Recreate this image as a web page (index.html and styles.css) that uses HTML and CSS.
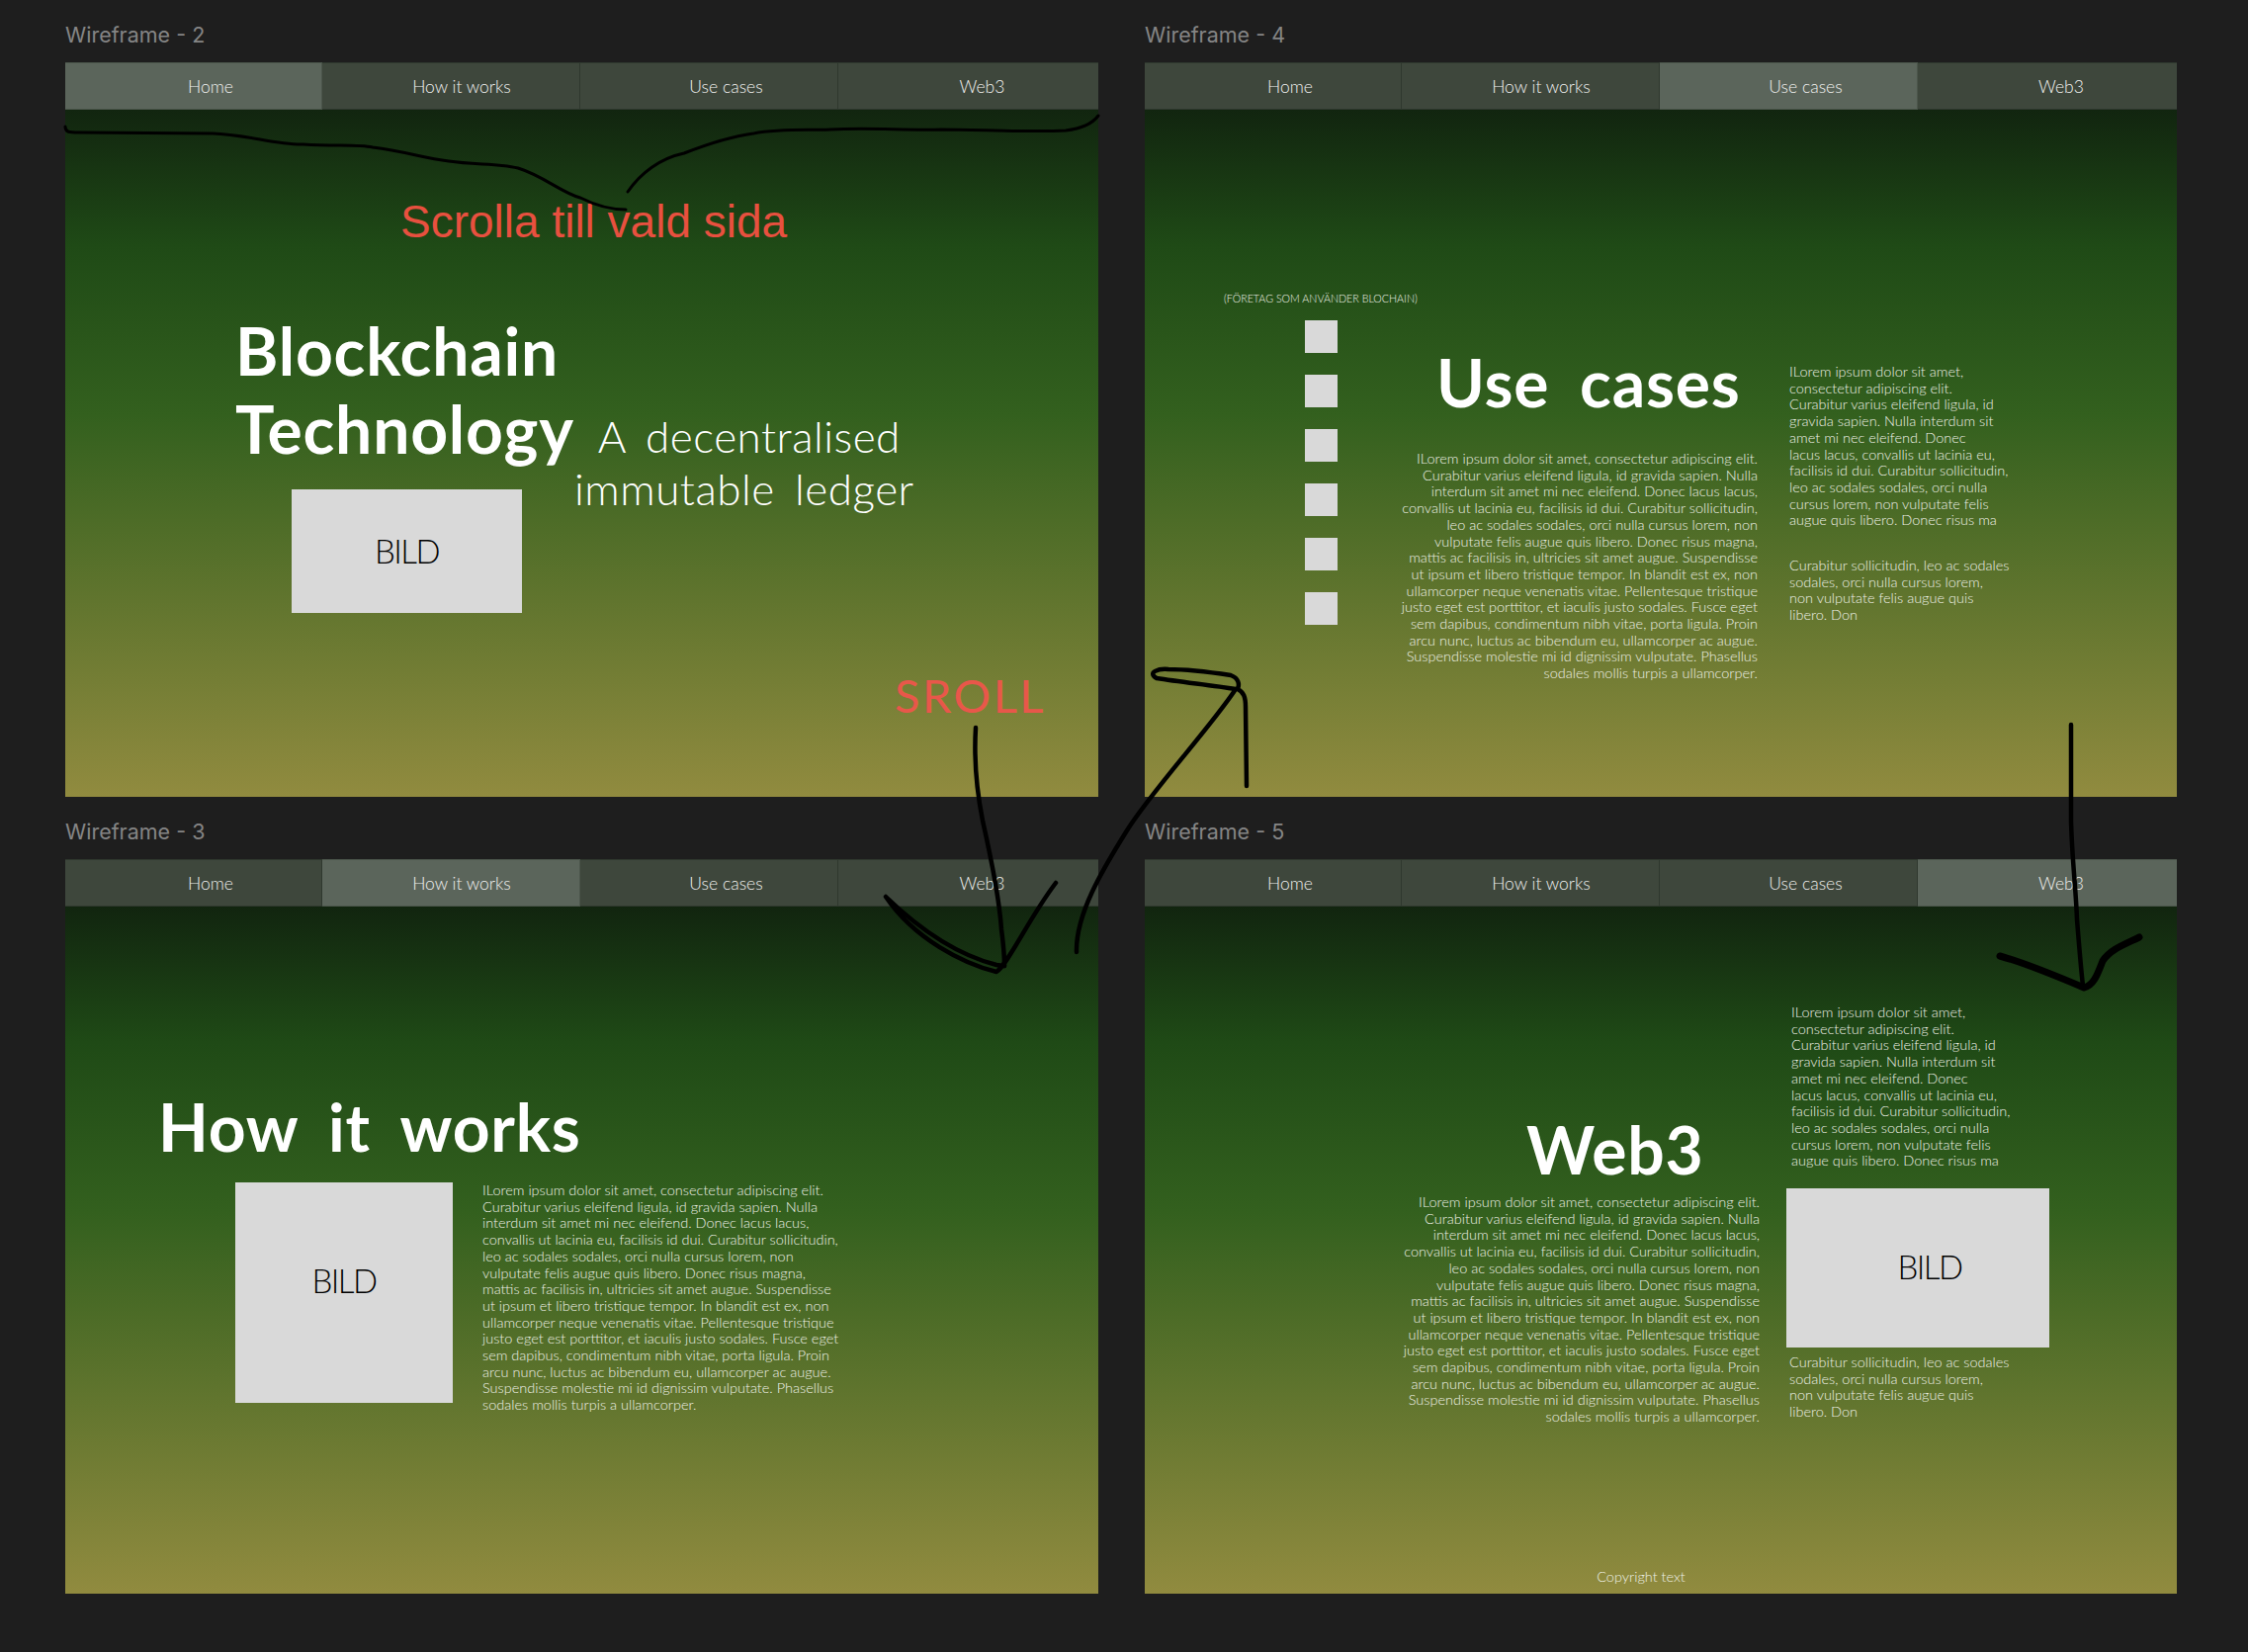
FILE: index.html
```html
<!DOCTYPE html>
<html lang="en">
<head>
  <meta charset="utf-8" />
  <title>Wireframes</title>
  <link rel="stylesheet" href="styles.css">
</head>
<body>
  <div id="board">

    <!-- home -->
    <section class="cell">
      <div class="label">Wireframe - 2</div>
      <div class="frame">
        <nav class="nav">
          <a class="tab active">Home</a><a class="tab">How it works</a><a class="tab">Use cases</a><a class="tab">Web3</a>
        </nav>
        <div class="screen home">
          <div class="note scroll-note">Scrolla till vald sida</div>
          <div class="home-left">
            <h1 class="title">Blockchain<br>Technology</h1>
            <div class="pic pic-home">BILD</div>
          </div>
          <p class="tagline">A decentralised<br>immutable ledger</p>
          <div class="note sroll">SROLL</div>
        </div>
      </div>
    </section>

    <!-- use cases -->
    <section class="cell">
      <div class="label">Wireframe - 4</div>
      <div class="frame">
        <nav class="nav">
          <a class="tab">Home</a><a class="tab">How it works</a><a class="tab active">Use cases</a><a class="tab">Web3</a>
        </nav>
        <div class="screen uses">
          <div class="logos">
            <div class="caption">(FÖRETAG SOM ANVÄNDER BLOCHAIN)</div>
            <div class="squares">
              <i></i><i></i><i></i><i></i><i></i><i></i>
            </div>
          </div>
          <div class="mid">
            <h1 class="title">Use cases</h1>
            <p class="copy right">ILorem ipsum dolor sit amet, consectetur adipiscing elit.<br>Curabitur varius eleifend ligula, id gravida sapien. Nulla<br>interdum sit amet mi nec eleifend. Donec lacus lacus,<br>convallis ut lacinia eu, facilisis id dui. Curabitur sollicitudin,<br>leo ac sodales sodales, orci nulla cursus lorem, non<br>vulputate felis augue quis libero. Donec risus magna,<br>mattis ac facilisis in, ultricies sit amet augue. Suspendisse<br>ut ipsum et libero tristique tempor. In blandit est ex, non<br>ullamcorper neque venenatis vitae. Pellentesque tristique<br>justo eget est porttitor, et iaculis justo sodales. Fusce eget<br>sem dapibus, condimentum nibh vitae, porta ligula. Proin<br>arcu nunc, luctus ac bibendum eu, ullamcorper ac augue.<br>Suspendisse molestie mi id dignissim vulputate. Phasellus<br>sodales mollis turpis a ullamcorper.</p>
          </div>
          <div class="side">
            <p class="copy">ILorem ipsum dolor sit amet,<br>consectetur adipiscing elit.<br>Curabitur varius eleifend ligula, id<br>gravida sapien. Nulla interdum sit<br>amet mi nec eleifend. Donec<br>lacus lacus, convallis ut lacinia eu,<br>facilisis id dui. Curabitur sollicitudin,<br>leo ac sodales sodales, orci nulla<br>cursus lorem, non vulputate felis<br>augue quis libero. Donec risus ma</p>
            <p class="copy second">Curabitur sollicitudin, leo ac sodales<br>sodales, orci nulla cursus lorem,<br>non vulputate felis augue quis<br>libero. Don</p>
          </div>
        </div>
      </div>
    </section>

    <!-- how it works -->
    <section class="cell">
      <div class="label">Wireframe - 3</div>
      <div class="frame">
        <nav class="nav">
          <a class="tab">Home</a><a class="tab active">How it works</a><a class="tab">Use cases</a><a class="tab">Web3</a>
        </nav>
        <div class="screen how">
          <h1 class="title">How it works</h1>
          <div class="how-row">
            <div class="pic pic-how">BILD</div>
            <p class="copy">ILorem ipsum dolor sit amet, consectetur adipiscing elit.<br>Curabitur varius eleifend ligula, id gravida sapien. Nulla<br>interdum sit amet mi nec eleifend. Donec lacus lacus,<br>convallis ut lacinia eu, facilisis id dui. Curabitur sollicitudin,<br>leo ac sodales sodales, orci nulla cursus lorem, non<br>vulputate felis augue quis libero. Donec risus magna,<br>mattis ac facilisis in, ultricies sit amet augue. Suspendisse<br>ut ipsum et libero tristique tempor. In blandit est ex, non<br>ullamcorper neque venenatis vitae. Pellentesque tristique<br>justo eget est porttitor, et iaculis justo sodales. Fusce eget<br>sem dapibus, condimentum nibh vitae, porta ligula. Proin<br>arcu nunc, luctus ac bibendum eu, ullamcorper ac augue.<br>Suspendisse molestie mi id dignissim vulputate. Phasellus<br>sodales mollis turpis a ullamcorper.</p>
          </div>
        </div>
      </div>
    </section>

    <!-- web3 -->
    <section class="cell">
      <div class="label">Wireframe - 5</div>
      <div class="frame">
        <nav class="nav">
          <a class="tab">Home</a><a class="tab">How it works</a><a class="tab">Use cases</a><a class="tab active">Web3</a>
        </nav>
        <div class="screen web3">
          <div class="web3-cols">
            <div class="mid">
              <h1 class="title">Web3</h1>
              <p class="copy right">ILorem ipsum dolor sit amet, consectetur adipiscing elit.<br>Curabitur varius eleifend ligula, id gravida sapien. Nulla<br>interdum sit amet mi nec eleifend. Donec lacus lacus,<br>convallis ut lacinia eu, facilisis id dui. Curabitur sollicitudin,<br>leo ac sodales sodales, orci nulla cursus lorem, non<br>vulputate felis augue quis libero. Donec risus magna,<br>mattis ac facilisis in, ultricies sit amet augue. Suspendisse<br>ut ipsum et libero tristique tempor. In blandit est ex, non<br>ullamcorper neque venenatis vitae. Pellentesque tristique<br>justo eget est porttitor, et iaculis justo sodales. Fusce eget<br>sem dapibus, condimentum nibh vitae, porta ligula. Proin<br>arcu nunc, luctus ac bibendum eu, ullamcorper ac augue.<br>Suspendisse molestie mi id dignissim vulputate. Phasellus<br>sodales mollis turpis a ullamcorper.</p>
            </div>
            <div class="side">
              <p class="copy first">ILorem ipsum dolor sit amet,<br>consectetur adipiscing elit.<br>Curabitur varius eleifend ligula, id<br>gravida sapien. Nulla interdum sit<br>amet mi nec eleifend. Donec<br>lacus lacus, convallis ut lacinia eu,<br>facilisis id dui. Curabitur sollicitudin,<br>leo ac sodales sodales, orci nulla<br>cursus lorem, non vulputate felis<br>augue quis libero. Donec risus ma</p>
              <div class="pic pic-web3">BILD</div>
              <p class="copy after">Curabitur sollicitudin, leo ac sodales<br>sodales, orci nulla cursus lorem,<br>non vulputate felis augue quis<br>libero. Don</p>
            </div>
          </div>
          <footer class="copyright">Copyright text</footer>
        </div>
      </div>
    </section>
  </div>

  <!-- pen scribbles drawn over the whole board -->
  <svg class="ink" width="2274" height="1671" viewBox="0 0 2274 1671">
    <path d="M66 128 C66 134 70 134 80 134 L215 135 C250 136 280 147 307 146 C340 148 362 146 377 149 C410 153 428 160 454 163 C480 167 505 165 524 170 C550 178 568 195 587 200 C605 209 620 212 633 212" />
    <path d="M635 194 C648 175 668 160 692 155 C715 146 740 138 762 135 C790 130 815 132 840 131 C880 129 915 132 952 131 C990 131 1040 134 1078 132 C1095 130 1105 125 1111 117" />
    <path class="thick" d="M987 736 C985 770 988 800 994 830 C1003 870 1011 910 1013 940 C1015 955 1016 965 1016 977" />
    <path class="thick" d="M896 907 C925 935 965 965 1008 976 L1016 977 M896 907 C925 950 975 975 1008 983 C1020 975 1040 930 1068 893" />
    <path class="thick" d="M1089 963 C1088 925 1115 880 1140 840 C1165 800 1225 735 1250 697 C1225 693 1195 690 1170 686 C1160 680 1172 676 1182 677 C1205 677 1225 680 1245 683 C1253 686 1254 692 1252 697 C1258 700 1260 705 1260 715 L1261 795" />
    <path class="thick" d="M2095 733 L2095 830 C2096 870 2100 900 2101 930 C2103 955 2105 980 2107 997" />
    <path class="heavy" d="M2023 967 C2045 973 2075 985 2108 999 C2118 997 2122 985 2127 972 C2135 960 2150 955 2164 948" />
  </svg>
</body>
</html>
```

FILE: styles.css
```css
body {
  margin: 0;
  background: #1e1e1e;
  font-family: "Lato", "Open Sans", sans-serif;
}
#board {
  display: grid;
  grid-template-columns: 1045px 1044px;
  grid-auto-rows: 806px;
  column-gap: 47px;
  padding-left: 66px;
  height: 1671px;
  box-sizing: border-box;
}
.label {
  height: 63px;
  padding-top: 22px;
  box-sizing: border-box;
  font: 400 21.5px/26px "Inter", sans-serif;
  color: #858585;
}
.frame {
  position: relative;
  height: 743px;
  display: flex;
  flex-direction: column;
  background: linear-gradient(180deg, #11240f 6%, #1f4a16 25%, #33601e 48%, #918b3f 100%);
}

/* nav */
.nav {
  display: grid;
  grid-template-columns: 260px 261px 261px 1fr;
  height: 48px;
  flex: none;
}
.tab {
  display: flex;
  align-items: center;
  justify-content: center;
  background: #3e473c;
  border: solid #2f382e;
  border-width: 1px 1px 1px 0;
  color: #f0f0ee;
  font-size: 17.5px;
  font-weight: 300;
}
.tab:last-child { border-right: 0; }
.tab:nth-child(1) { padding-left: 35px; }
.tab:nth-child(2) { padding-left: 22px; }
.tab:nth-child(3) { padding-left: 35px; }
.tab:nth-child(4) { padding-left: 28px; }
.tab.active {
  background: #5b655b;
  border-color: #4b554b;
}

/* shared bits */
.screen {
  flex: 1;
  min-height: 0;
  display: flex;
}
.title {
  margin: 0;
  font-size: 66px;
  line-height: 79px;
  font-weight: 700;
  letter-spacing: 0.8px;
  color: #fff;
  white-space: nowrap;
}
.copy {
  margin: 0;
  font-size: 14.5px;
  line-height: 16.7px;
  font-weight: 300;
  color: #eef0e6;
  white-space: nowrap;
}
.right { text-align: right; }
.pic {
  display: flex;
  align-items: center;
  justify-content: center;
  background: #d9d9d9;
  color: #000;
  font-size: 33px;
  font-weight: 300;
  letter-spacing: -1.5px;
}
.note { position: absolute; }

/* home */
.scroll-note {
  left: 339px;
  top: 135px;
  font: 400 46px/52px "Liberation Sans", sans-serif;
  color: #e8503f;
}
.sroll {
  left: 839px;
  top: 612px;
  font-size: 47px;
  line-height: 56px;
  font-weight: 400;
  letter-spacing: 2.5px;
  color: #e8574a;
}
.home { padding: 204px 0 0 172px; }
.home-left { width: 343px; }
.pic-home {
  width: 233px;
  height: 125px;
  margin: 22px 0 0 57px;
  padding-bottom: 2px;
  box-sizing: border-box;
}
.tagline {
  margin: 100px 0 0;
  font-size: 44px;
  line-height: 53px;
  font-weight: 300;
  letter-spacing: 0.5px;
  word-spacing: 8px;
  text-indent: 10px;
  color: #fff;
  text-align: center;
  white-space: nowrap;
  align-self: flex-start;
}

/* how it works */
.how {
  flex-direction: column;
  padding: 183px 0 0 94px;
}
.how .title { word-spacing: 14px; }
.how-row {
  display: flex;
  align-items: flex-start;
  gap: 30px;
  margin: 17px 0 0 78px;
}
.pic-how {
  width: 220px;
  height: 223px;
  padding-bottom: 26px;
  box-sizing: border-box;
}

/* use cases */
.uses {
  align-items: flex-start;
  padding: 184px 0 0 80px;
}
.logos { width: 170px; flex: none; }
.caption {
  font-size: 10.7px;
  line-height: 14px;
  font-weight: 300;
  color: #eef0e6;
  white-space: nowrap;
}
.squares {
  display: flex;
  flex-direction: column;
  gap: 22px;
  margin: 15px 0 0 82px;
}
.squares i {
  display: block;
  width: 33px;
  height: 33px;
  background: #d9d9d9;
}
.mid {
  width: 370px;
  flex: none;
  margin-top: 52px;
}
.uses .title {
  padding-left: 45px;
  word-spacing: 14px;
}
.uses .copy.right { margin-top: 30px; }
.side {
  margin-left: 32px;
  flex: none;
}
.uses .side { margin-top: 73px; }
.second { margin-top: 29px; }

/* web3 */
.web3 { flex-direction: column; }
.web3-cols {
  flex: 1;
  display: flex;
  align-items: flex-start;
  padding-left: 252px;
}
.web3 .mid { margin-top: 206px; }
.web3 .title { padding-left: 134px; }
.web3 .copy.right { margin-top: 6px; }
.web3 .side {
  margin-left: 27px;
  margin-top: 99px;
}
.first { padding-left: 5px; }
.after { padding-left: 3px; margin-top: 7px; }
.pic-web3 {
  width: 266px;
  height: 161px;
  margin-top: 19px;
  padding: 0 0 4px 24px;
  box-sizing: border-box;
}
.copyright {
  padding: 0 40px 8px 0;
  font-size: 14.5px;
  line-height: 16.7px;
  font-weight: 300;
  color: #eef0e6;
  text-align: center;
}

/* ink */
.ink {
  position: absolute;
  top: 0;
  left: 0;
  pointer-events: none;
}
.ink path {
  fill: none;
  stroke: #000;
  stroke-width: 3;
  stroke-linecap: round;
  stroke-linejoin: round;
}
.ink path.thick { stroke-width: 4.5; }
.ink path.heavy { stroke-width: 7; }
```
